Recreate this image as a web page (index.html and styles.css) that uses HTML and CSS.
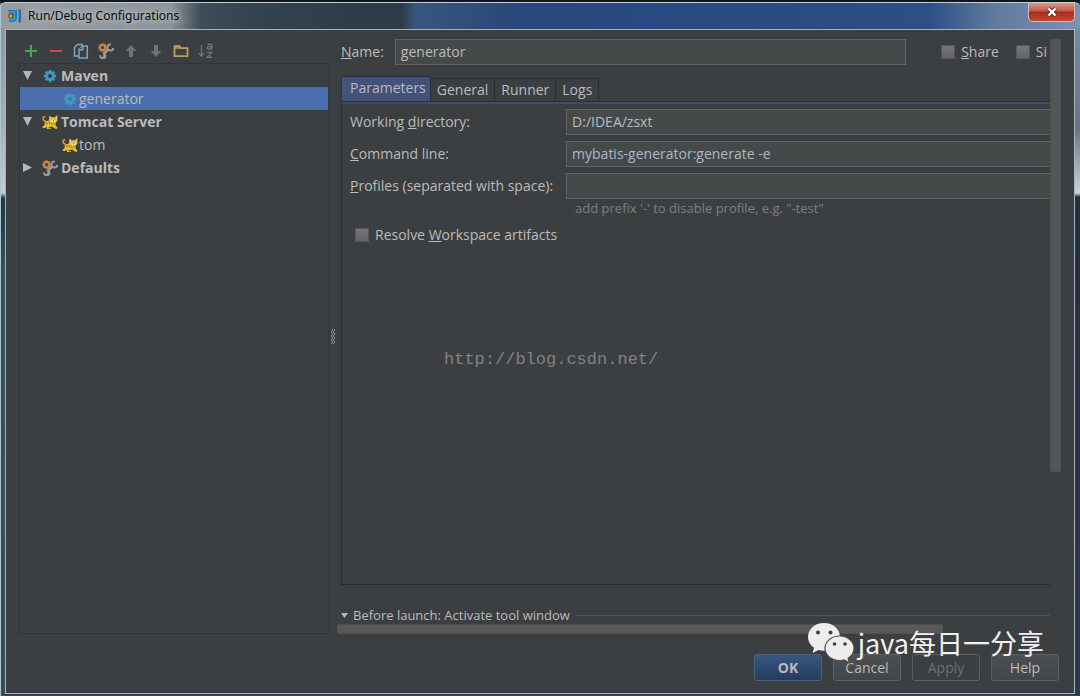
FILE: index.html
```html
<!DOCTYPE html>
<html lang="en">
<head>
<meta charset="utf-8">
<title>Run/Debug Configurations</title>
<link rel="stylesheet" href="styles.css">
</head>
<body>
<svg class="defs" aria-hidden="true">
  <symbol id="gear" viewBox="0 0 16 16">
    <circle cx="8" cy="8" r="4" fill="none" stroke="currentColor" stroke-width="3.200"/>
    <path d="M8 1V4M8 12v3M1 8H4M12 8h3M3 3l2 2M11 11l2 2M13 3l-2 2M5 11l-2 2" stroke="currentColor" stroke-width="2.600"/>
  </symbol>
  <symbol id="tools" viewBox="0 0 16 16">
    <path d="M10 6.500L5.500 11" stroke="#999b9d" stroke-width="2.800"/>
    <path d="M12.800 1.500a3 3 0 1 0 2.600 3.400M2.300 12.200a2.600 2.600 0 1 0 3.200-1.800M5.500 10.500a2.600 2.600 0 0 1-1.500 4.500" fill="none" stroke="#999b9d" stroke-width="1.900"/>
    <circle cx="4.600" cy="4.600" r="2.700" fill="none" stroke="#c9853f" stroke-width="2.200"/>
    <path d="M4.600.3v2M4.600 6.900v2M.3 4.600h2M6.900 4.600h2M1.500 1.500l1.200 1.200M7.700 1.500L6.500 2.700M1.500 7.700l1.200-1.200M7.700 7.700L6.500 6.500" stroke="#c9853f" stroke-width="1.600"/>
  </symbol>
  <symbol id="cat" viewBox="0 0 16 16">
    <path d="M3.500 7.500L1.300 5.800 1.200 3.500 3.200 2.600" fill="none" stroke="#c99f2c" stroke-width="1.600"/>
    <path d="M3 7.500l4-1 .2-5 2.300 1.700h3.300L15.300 1l.2 5.500-2 2.500.3 2.500 1.700 2.300-.8 1.200-2.500-.7-2-1.800-3.200.8-.5 1h2.500V15H5l-.3-2.300L3.200 14H.8l-.3-1.300 2-1.500z" fill="#e3bd2f"/>
    <path d="M8 3l1.800 1.200h3L14.600 3l-.2 3.200-2 1.700H10L8.200 6.200z" fill="#f0df93"/>
    <path d="M9.200 5h1.300M12.200 5h1.300M11 6.700h1M4.500 8.500l1 1.800M6.800 7.800l1 2M9.200 9.300l1 1.600M11.800 9.300l.6 1.200" stroke="#6b531c" stroke-width=".9"/>
  </symbol>
</svg>

<div class="window">
  <header class="titlebar">
    <svg class="app-icon" viewBox="0 0 16 16" aria-hidden="true">
      <path d="M1 2h9v7.500A4.500 4.500 0 0 1 5.500 14H2v-2.500h3" fill="#1e78b4"/>
      <path d="M2.500 4h5v5a3 3 0 0 1-3 3H3" fill="none" stroke="#35a3dc" stroke-width="1.500"/>
      <circle cx="3.800" cy="8" r="2.200" fill="#d9a552" stroke="#745022" stroke-width="1.200"/>
      <path d="M12.800 1.500v13" stroke="#1d6fb0" stroke-width="2.400"/>
    </svg>
    <h1 class="title">Run/Debug Configurations</h1>
    <button class="close" type="button" aria-label="Close">
      <svg viewBox="0 0 12 10" aria-hidden="true"><path d="M2.500 1.500l7 7M9.500 1.500l-7 7" stroke="#5b2a2a" stroke-width="4"/><path d="M2.500 1.500l7 7M9.500 1.500l-7 7" stroke="#fff" stroke-width="2.400"/></svg>
    </button>
  </header>

  <main class="client">
    <div class="content">
      <aside class="sidebar">
        <div class="toolbar" role="toolbar" aria-label="Configurations">
          <button type="button" aria-label="Add"><svg viewBox="0 0 16 16"><path d="M8 2v12M2 8h12" stroke="#3eae49" stroke-width="2"/></svg></button>
          <button type="button" aria-label="Remove"><svg viewBox="0 0 16 16"><path d="M2 8h12" stroke="#c94f45" stroke-width="2"/></svg></button>
          <button type="button" aria-label="Copy"><svg viewBox="0 0 16 16" fill="#3c3f41" stroke="#7fa5bd" stroke-width="1.500"><path d="M1.500 4.500l3-3H9V13H1.500z"/><path d="M6 6.500L9.500 3h4.800v12H6z"/><path d="M6 6.800h3.800V3"/></svg></button>
          <button type="button" aria-label="Edit defaults"><svg><use href="#tools"/></svg></button>
          <button type="button" aria-label="Move up"><svg viewBox="0 0 16 16" fill="#6f7173"><path d="M8 2l5.500 6H10v6H6V8H2.500z"/></svg></button>
          <button type="button" aria-label="Move down"><svg viewBox="0 0 16 16" fill="#6f7173"><path d="M8 14L2.500 8H6V2h4v6h3.500z"/></svg></button>
          <button type="button" aria-label="New folder"><svg viewBox="0 0 16 16"><path d="M1.500 13.200V3.200h5l1.500 2h6.500v8z" fill="none" stroke="#bf9e5c" stroke-width="1.800"/><path d="M1.500 5h6" stroke="#bf9e5c" stroke-width="1.500"/></svg></button>
          <button type="button" aria-label="Sort"><svg viewBox="0 0 16 16" fill="none" stroke="#6f7173" stroke-width="1.400"><path d="M3.500 2v11M.8 10l2.700 3.200L6.200 10"/><path d="M9.500 1.200h3.200q1 0 1 1v4M13.700 3.500H10.500q-1.200 0-1.200 1.300t1.200 1.200h3.200"/><path d="M9.200 9.500h4.600l-4.600 4.800H14"/></svg></button>
        </div>
        <ul class="tree" role="tree" aria-label="Run configurations">
          <li class="node group" role="treeitem" aria-expanded="true"><span class="twist open"></span><svg class="gear"><use href="#gear"/></svg><span>Maven</span></li>
          <li class="node child selected" role="treeitem" aria-selected="true"><svg class="gear"><use href="#gear"/></svg><span>generator</span></li>
          <li class="node group" role="treeitem" aria-expanded="true"><span class="twist open"></span><svg><use href="#cat"/></svg><span>Tomcat Server</span></li>
          <li class="node child" role="treeitem"><svg><use href="#cat"/></svg><span>tom</span></li>
          <li class="node group" role="treeitem" aria-expanded="false"><span class="twist"></span><svg><use href="#tools"/></svg><span>Defaults</span></li>
        </ul>
      </aside>

      <div class="splitter"><span class="grip"></span></div>

      <section class="editor">
        <div class="viewport">
          <div class="name-row">
            <label for="name"><u>N</u>ame:</label>
            <input class="field" id="name" type="text" value="generator">
            <label class="check"><input type="checkbox"><span><u>S</u>hare</span></label>
            <label class="check"><input type="checkbox"><span>Si</span></label>
          </div>
          <div class="tabs" role="tablist">
            <button class="tab active" type="button" role="tab" aria-selected="true">Parameters</button>
            <button class="tab" type="button" role="tab">General</button>
            <button class="tab" type="button" role="tab">Runner</button>
            <button class="tab" type="button" role="tab">Logs</button>
          </div>
          <form class="panel">
            <label for="dir">Working <u>d</u>irectory:</label>
            <input class="field" id="dir" type="text" value="D:/IDEA/zsxt">
            <label for="cmd"><u>C</u>ommand line:</label>
            <input class="field command" id="cmd" type="text" value="mybatis-generator:generate -e">
            <label for="profiles"><u>P</u>rofiles (separated with space):</label>
            <input class="field" id="profiles" type="text" aria-describedby="hint">
            <p class="hint" id="hint">add prefix '-' to disable profile, e.g. "-test"</p>
            <label class="check resolve"><input type="checkbox"><span>Resolve <u>W</u>orkspace artifacts</span></label>
          </form>
          <div class="before"><span class="twist open small"></span><span>Before launch: Activate tool window</span><span class="rule"></span></div>
        </div>
        <div class="vscroll"><div class="vthumb"></div></div>
        <div class="hscroll"><div class="hthumb"></div></div>
      </section>
    </div>

    <footer class="actions">
      <button class="btn primary" type="button">OK</button>
      <button class="btn" type="button">Cancel</button>
      <button class="btn" type="button" disabled>Apply</button>
      <button class="btn" type="button">Help</button>
    </footer>
  </main>
</div>

<div class="url-mark">http://blog.csdn.net/</div>
<div class="brand-mark">
  <svg viewBox="0 0 48 42" aria-hidden="true">
    <path d="M17 1C8 1 1 7.200 1 15c0 4.500 2.300 8.200 6 10.800L5.500 31l6-3c1.800.5 3.600.8 5.500.8 9 0 16-6 16-13.800S26 1 17 1z" fill="#ededed"/>
    <path d="M32.500 14C24.500 14 18 19.500 18 26.300s6.500 12.300 14.500 12.300c1.700 0 3.300-.2 4.800-.7l5.200 2.900-1.400-4.600c3.600-2.300 5.900-5.800 5.900-9.900C47 19.500 40.500 14 32.500 14z" fill="#ededed" stroke="#4b4d4f" stroke-width="1.200"/>
    <g fill="#3f4143"><circle cx="11" cy="10.500" r="2"/><circle cx="23.500" cy="10.500" r="2"/><circle cx="27.500" cy="22" r="1.800"/><circle cx="38" cy="22" r="1.800"/></g>
  </svg>
  <span>java每日一分享</span>
</div>
</body>
</html>
```
FILE: styles.css
```css
* { box-sizing: border-box; }

body {
  margin: 0;
  background: #12171d;
  color: #bbbbbb;
  font: 14px/20px "Open Sans", "Noto Sans", sans-serif;
}

button, input { font: inherit; color: inherit; }

.defs { position: absolute; width: 0; height: 0; }

/* Window frame */
.window {
  display: flex;
  flex-direction: column;
  min-height: 100vh;
  padding: 1px 5px 2px 4px;
  border-top: 2px solid #11161c;
  border-left: 1px solid #a9c6cf;
  border-radius: 6px 6px 0 0;
  background:
    linear-gradient(#7589a5, #6a7385 100px, #cdd2d8 165px, #24303d 169px, #2b3a4c) right 0 top 26px / 5px 100% no-repeat,
    linear-gradient(#8d969e, #a9b0b5 100px, #c8cccf 165px, #1f3748 170px, #36505b 240px, #3a4c58) left 0 top 26px / 4px 100% no-repeat,
    linear-gradient(90deg, #989da2 0, #8b939b 170px, #3f4c5a 200px, #33424f 260px, #2d3a48 400px, #37577f 415px, #28477b 520px, #294b84 66%, #2d4f88 86%, #5f7a9c 92%, #7b92b5) 0 0 / 100% 28px no-repeat,
    #34424f;
  box-shadow: inset 0 1px #c5d0d8;
}

.titlebar {
  display: flex;
  align-items: center;
  height: 26px;
}

.app-icon { width: 16px; height: 16px; margin: 0 5px 0 2px; }

.title {
  flex: 1;
  margin: 0;
  color: #0a0c0e;
  font: 12px/16px "Noto Sans", "Open Sans", sans-serif;
  text-shadow: 0 0 6px #ccd2d6, 0 0 8px #b9c0c6;
}

.close {
  display: grid;
  place-items: center;
  align-self: flex-start;
  width: 47px;
  height: 19px;
  padding: 0;
  border: 1px solid #d9b9b6;
  border-top: 0;
  border-radius: 0 0 5px 5px;
  background: linear-gradient(#d99a8d, #c4584a 45%, #a82c1f 50%, #c4452f);
}

.close svg { width: 12px; height: 10px; }

.client {
  display: flex;
  flex: 1;
  flex-direction: column;
  padding: 9px 13px 12px;
  border: 1px solid #a9b3bb;
  background: #3c3f41;
}

.content { display: flex; flex: 1; }

/* Configuration list */
.sidebar { display: flex; flex-direction: column; width: 310px; }

.toolbar { display: flex; height: 24px; margin-left: -1px; }

.toolbar button {
  display: grid;
  place-items: center;
  width: 25px;
  padding: 0;
  border: 0;
  background: none;
}

.toolbar svg { width: 16px; height: 16px; }

.tree {
  flex: 1;
  margin: 0;
  padding: 0;
  border: 1px solid #323537;
  list-style: none;
}

.node { display: flex; align-items: center; height: 23px; padding-left: 3px; }
.node svg { width: 16px; height: 16px; margin: 0 3px 0 10px; color: #3d9ac2; }
.node .gear { padding: 1px; }
.group { font-weight: 700; }
.child svg { margin: 0 1px 0 39px; }
.selected { background: #4b6eaf; }

.twist {
  width: 9px;
  height: 9px;
  background: #b4b6b7;
  clip-path: polygon(0 0, 100% 50%, 0 100%);
}
.twist.open { clip-path: polygon(0 0, 100% 0, 50% 100%); }
.twist.small { width: 7px; height: 5px; }

.splitter { display: grid; place-items: center; width: 8px; }

.grip {
  width: 4px;
  height: 15px;
  background: repeating-conic-gradient(#8b8e90 0 25%, #3c3f41 0 50%) 0 0 / 2px 4px;
}

/* Editor */
.editor {
  display: grid;
  flex: 1;
  grid-template: 1fr 10px / minmax(0, 1fr) 11px;
  min-width: 0;
}

.viewport {
  display: flex;
  flex-direction: column;
  min-width: 0;
  padding-left: 4px;
  overflow: hidden;
}

.name-row { display: flex; align-items: center; padding-right: 3px; white-space: nowrap; }
.name-row .field { flex: 1; margin: 0 35px 0 11px; }
.name-row .check + .check { margin-left: 17px; }

.field {
  min-width: 0;
  height: 26px;
  padding: 0 5px 1px;
  border: 1px solid #616466;
  border-radius: 0;
  outline: 0;
  background: #45494a;
}

.command { color: #a9b7c6; }

.check { display: flex; align-items: center; gap: 6px; }

.check input {
  width: 14px;
  height: 14px;
  margin: 0;
  border: 1px solid #55585a;
  appearance: none;
  background: linear-gradient(#747678, #626466);
}

.tabs {
  display: flex;
  align-items: flex-end;
  margin-top: 11px;
  border-bottom: 1px solid #2a3142;
}

.tab {
  height: 23px;
  padding: 0 6px;
  border: 1px solid #2c2f31;
  border-bottom: 0;
  border-left: 0;
  border-radius: 2px 2px 0 0;
  background: #3c3f41;
}

.tab.active {
  height: 25px;
  padding: 0 4px 2px 8px;
  border-left: 1px solid #2c3345;
  background: #42527b;
}

.panel {
  display: grid;
  flex: 1;
  grid-template-columns: max-content minmax(0, 1fr);
  align-content: start;
  align-items: center;
  gap: 6px 13px;
  padding: 5px 0 0 8px;
  border: 1px solid #292c2e;
  border-top: 2px solid #42496a;
  border-right: 0;
}

.panel .field { border-right: 0; }

.hint {
  grid-column: 2;
  margin: -5px 0 0 9px;
  color: #7c7e80;
  font-size: 13px;
  line-height: 16px;
}

.resolve { grid-column: 1 / -1; margin: 3px 0 0 5px; }

.before {
  display: flex;
  align-items: center;
  gap: 5px;
  margin-top: 22px;
  white-space: nowrap;
  font-size: 13px;
  line-height: 17px;
}

.rule { flex: 1; height: 1px; background: #505355; }

.vscroll { height: 100%; }
.vthumb { height: 74%; border: 1px solid #4b4d4e; background: #565656; }
.hscroll { display: flex; }
.hthumb { width: 85%; border: 1px solid #4e5051; background: #595959; }

/* Dialog buttons */
.actions {
  display: flex;
  justify-content: flex-end;
  gap: 11px;
  padding: 20px 2px 0 0;
}

.btn {
  width: 68px;
  height: 27px;
  padding: 0;
  border: 1px solid #5c6062;
  border-radius: 3px;
  background: linear-gradient(#4c5052, #424648);
}

.btn:disabled { background: none; color: #6f7173; }

.primary {
  border-color: #4a5f80;
  background: linear-gradient(#365880, #263c5c);
  font-weight: 700;
}

/* Overlaid marks */
.url-mark {
  position: absolute;
  top: 350px;
  left: 444px;
  color: #808284;
  font: 17px/20px "Liberation Mono", monospace;
}

.brand-mark {
  position: absolute;
  right: 36px;
  bottom: 32px;
  display: flex;
  align-items: center;
  gap: 3px;
  color: #f2f2f2;
  font: 27px/40px "Noto Sans CJK SC", sans-serif;
}

.brand-mark svg { width: 48px; height: 42px; }
```
